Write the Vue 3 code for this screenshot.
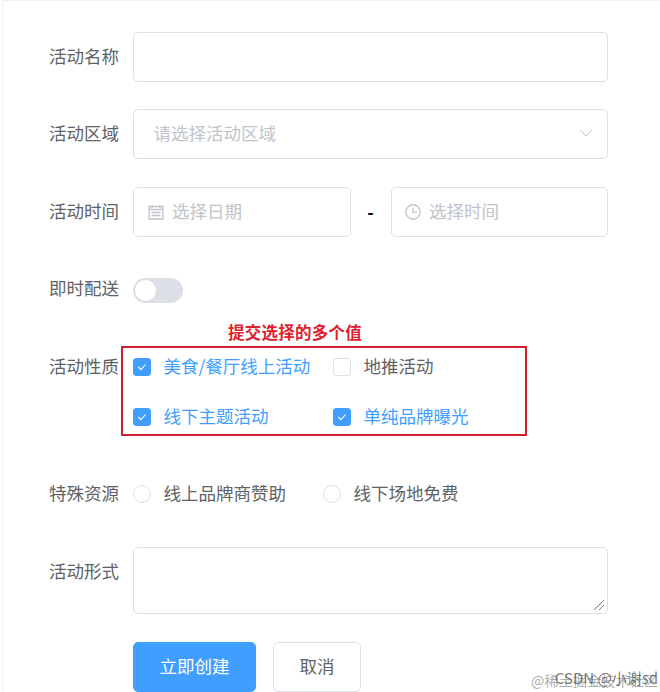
<template>
  <div class="page">
    <form class="form" @submit.prevent>
      <div class="row">
        <label class="label">活动名称</label>
        <div class="control"><div class="input"></div></div>
      </div>

      <div class="row">
        <label class="label">活动区域</label>
        <div class="control">
          <div class="input select">
            <span class="placeholder">请选择活动区域</span>
            <svg class="arrow" viewBox="0 0 14 8" width="14" height="8">
              <path d="M1 1l6 6 6-6" fill="none" stroke="#c0c4cc" stroke-width="1" />
            </svg>
          </div>
        </div>
      </div>

      <div class="row">
        <label class="label">活动时间</label>
        <div class="control split">
          <div class="input picker date">
            <svg class="prefix" viewBox="0 0 16 16" width="16" height="16">
              <path d="M1 2.5h14v12.5H1zM1 5.5h14M4 1v3M12 1v3M3.5 8.5h9M3.5 11.5h9" fill="none" stroke="#c0c4cc" stroke-width="1.3" />
            </svg>
            <span class="placeholder">选择日期</span>
          </div>
          <span class="dash">-</span>
          <div class="input picker time">
            <svg class="prefix" viewBox="0 0 16 16" width="16" height="16">
              <circle cx="8" cy="8" r="7.2" fill="none" stroke="#c0c4cc" stroke-width="1.4" />
              <path d="M8 3.8V8.3h3.8" fill="none" stroke="#c0c4cc" stroke-width="1.3" />
            </svg>
            <span class="placeholder">选择时间</span>
          </div>
        </div>
      </div>

      <div class="row">
        <label class="label">即时配送</label>
        <div class="control"><span class="switch"><span class="knob"></span></span></div>
      </div>

      <div class="row">
        <label class="label">活动性质</label>
        <div class="control checks">
          <span
            v-for="item in natures"
            :key="item.text"
            class="check"
            :class="{ 'is-checked': item.checked }"
          >
            <span class="check-box">
              <svg v-if="item.checked" viewBox="0 0 18 18" width="18" height="18">
                <path d="M4.8 9l3 3 5.2-5.8" fill="none" stroke="#fff" stroke-width="1.2" />
              </svg>
            </span>
            <span class="option-text">{{ item.text }}</span>
          </span>
        </div>
      </div>

      <div class="row">
        <label class="label">特殊资源</label>
        <div class="control radios">
          <span v-for="item in resources" :key="item" class="radio">
            <span class="radio-dot"></span>
            <span class="option-text">{{ item }}</span>
          </span>
        </div>
      </div>

      <div class="row">
        <label class="label">活动形式</label>
        <div class="control">
          <div class="textarea">
            <svg class="grip" viewBox="0 0 12 12" width="12" height="12">
              <path d="M1 11L11 1M6 11l5-5" stroke="#777" stroke-width="1" />
            </svg>
          </div>
        </div>
      </div>

      <div class="row last">
        <span class="label"></span>
        <div class="control buttons">
          <button class="btn primary" type="button">立即创建</button>
          <button class="btn" type="button">取消</button>
        </div>
      </div>
    </form>

    <!-- annotation drawn over the screenshot -->
    <div class="note">提交选择的多个值</div>
    <div class="note-box"></div>

    <div class="watermark wm-a">@稀土掘金技术社区</div>
    <div class="watermark wm-b">CSDN @小谢sd</div>
  </div>
</template>

<script setup>
const natures = [
  { text: '美食/餐厅线上活动', checked: true },
  { text: '地推活动', checked: false },
  { text: '线下主题活动', checked: true },
  { text: '单纯品牌曝光', checked: true },
];

const resources = ['线上品牌商赞助', '线下场地免费'];
</script>

<style>
html,
body {
  margin: 0;
  background: #fff;
}
</style>

<style scoped>
.page {
  position: relative;
  width: 658px;
  height: 692px;
  overflow: hidden;
  box-sizing: border-box;
  margin-left: 2px;
  border-left: 1px solid #f1f1f1;
  border-top: 1px solid #f1f1f1;
  font-family: "Noto Sans CJK SC", "Liberation Sans", sans-serif;
  font-size: 17.5px;
  color: #606266;
}

.form {
  box-sizing: border-box;
  width: 605px;
  padding-top: 30.9px;
}

.row {
  display: flex;
  margin-bottom: 27.5px;
}

.row.last {
  margin-bottom: 0;
  padding-top: 0.5px;
}

.label {
  flex: none;
  width: 116px;
  height: 50px;
  line-height: 47px;
  text-align: right;
}

.control {
  flex: 1;
  min-width: 0;
  margin-left: 14px;
  min-height: 50px;
  display: flex;
  align-items: center;
}

.input {
  box-sizing: border-box;
  width: 100%;
  height: 50px;
  border: 1px solid #dcdfe6;
  border-radius: 5px;
  background: #fff;
  display: flex;
  align-items: center;
}

.select {
  justify-content: space-between;
  padding: 0 14px 0 19.5px;
}

.arrow {
  margin-top: -2px;
}

.placeholder,
.option-text {
  line-height: 1;
  margin-top: -3px;
}

.placeholder {
  color: #c0c4cc;
}

.split {
  justify-content: space-between;
}

.picker {
  padding-left: 14px;
  gap: 8px;
}

.date {
  width: 218px;
}

.time {
  width: 217px;
  padding-left: 13px;
}

.dash {
  color: #000;
  font-weight: 700;
  margin-left: -1px;
}

.switch {
  position: relative;
  display: block;
  width: 50px;
  height: 25px;
  margin-top: 2px;
  border-radius: 13px;
  background: #dcdfe6;
}

.knob {
  position: absolute;
  top: 2px;
  left: 2px;
  width: 21px;
  height: 21px;
  border-radius: 50%;
  background: #fff;
}

.checks {
  display: grid;
  grid-template-columns: 200px 1fr;
  grid-auto-rows: 50px;
  align-items: center;
}

.check,
.radio {
  display: flex;
  align-items: center;
  gap: 12.5px;
}

.check-box {
  box-sizing: border-box;
  width: 18px;
  height: 18px;
  border: 1px solid #dcdfe6;
  border-radius: 3px;
  background: #fff;
  display: flex;
  align-items: center;
  justify-content: center;
}

.is-checked .check-box {
  border-color: #409eff;
  background: #409eff;
}

.is-checked .option-text {
  color: #409eff;
}

.radios {
  gap: 37px;
}

.radio-dot {
  box-sizing: border-box;
  width: 18px;
  height: 18px;
  border: 1px solid #dcdfe6;
  border-radius: 50%;
}

.textarea {
  position: relative;
  box-sizing: border-box;
  width: 100%;
  height: 67px;
  border: 1px solid #dcdfe6;
  border-radius: 5px;
}

.grip {
  position: absolute;
  right: 2px;
  bottom: 2px;
}

.buttons {
  gap: 17px;
}

.btn {
  box-sizing: border-box;
  height: 50px;
  width: 88px;
  padding: 0 0 3px;
  border: 1px solid #dcdfe6;
  border-radius: 5px;
  background: #fff;
  color: #606266;
  font: inherit;
}

.btn.primary {
  width: 123px;
  border-color: #409eff;
  background: #409eff;
  color: #fff;
}

.note {
  position: absolute;
  left: 225px;
  top: 321px;
  color: #e0202c;
  font-size: 16.5px;
  font-weight: 700;
  line-height: 20px;
  letter-spacing: 0.25px;
  white-space: nowrap;
}

.note-box {
  position: absolute;
  left: 118px;
  top: 345px;
  width: 406px;
  height: 90px;
  box-sizing: border-box;
  border: 2px solid #d0202e;
}

.watermark {
  position: absolute;
  right: 2px;
  bottom: 2px;
  line-height: 20px;
  font-size: 14.2px;
  white-space: nowrap;
  color: rgba(120, 120, 120, 0.6);
}

.wm-b {
  bottom: 4px;
  font-size: 15px;
  color: rgba(70, 70, 70, 0.7);
}
</style>
